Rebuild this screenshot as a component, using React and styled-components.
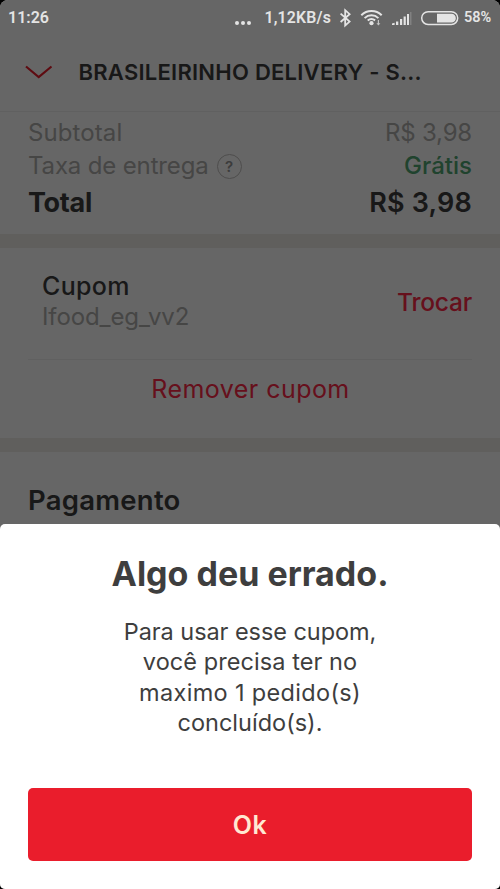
import React from 'react';
import styled, { createGlobalStyle } from 'styled-components';

const GlobalStyle = createGlobalStyle`
  * { box-sizing: border-box; }
  body { margin: 0; background: #000; }
`;

const Screen = styled.div`
  position: relative;
  width: 500px;
  height: 889px;
  overflow: hidden;
  border-radius: 8px 8px 5px 5px;
  background: #fff;
  color: #3e3e3e;
  font-family: Inter, "Liberation Sans", sans-serif;
`;

const Page = styled.main`
  display: flex;
  flex-direction: column;
  height: 100%;
`;

const Text = styled.span`
  display: block;
  margin: 0;
  white-space: pre;
  font-size: ${(p) => p.$size || 24}px;
  font-weight: ${(p) => p.$weight || 380};
  line-height: ${(p) => p.$line || 34}px;
  letter-spacing: ${(p) => p.$track || 0}px;
  color: ${(p) => p.$color || 'inherit'};
`;

const Header = styled.header`
  display: flex;
  align-items: center;
  height: 112px;
  padding: 32px 24px 0;
  border-bottom: 1px solid #f0f0f0;

  svg { margin-right: 25.5px; }
`;

const Summary = styled.section`
  display: flex;
  flex-direction: column;
  height: 122px;
  padding: 4px 28px 0;
`;

const SummaryRow = styled.div`
  display: flex;
  align-items: center;
  justify-content: space-between;
  height: ${(p) => p.$height}px;
`;

const Label = styled.div`
  display: flex;
  align-items: center;
`;

const Help = styled.span`
  display: flex;
  align-items: center;
  justify-content: center;
  width: 25px;
  height: 25px;
  margin-left: 8px;
  border: 1.5px solid #c2c0be;
  border-radius: 50%;
  color: #969696;
  font-size: 15px;
  font-weight: 600;
`;

const Band = styled.div`
  flex: none;
  height: 14px;
  background: #f0eee8;
`;

const Coupon = styled.section`
  height: 190px;
  padding: 12px 28px 0;
`;

const CouponRow = styled.div`
  display: flex;
  align-items: center;
  justify-content: space-between;
  height: 100px;
  padding: 0 0 16px 14px;
  border-bottom: 1px solid #f0f0f0;
`;

const RemoveButton = styled.button`
  display: flex;
  justify-content: center;
  width: 100%;
  height: 56px;
  padding: 12px 0 0 1px;
  border: 0;
  background: none;
  font-family: inherit;
`;

const Payment = styled.section`
  padding: 31px 28px 0;
`;

const Backdrop = styled.div`
  position: absolute;
  inset: 0;
  background: rgba(0, 0, 0, 0.6);
`;

const StatusBar = styled.div`
  position: absolute;
  top: 0;
  left: 0;
  display: flex;
  align-items: center;
  width: 100%;
  height: 35px;
  padding: 0 9px 0 8px;
  color: #e4e4e4;
  font-family: Roboto, sans-serif;
  font-weight: 600;
`;

const StatusText = styled.span`
  font-size: ${(p) => p.$size}px;
  letter-spacing: ${(p) => p.$track || 0}px;
  line-height: 35px;
  white-space: nowrap;
`;

const StatusIcons = styled.div`
  display: flex;
  align-items: center;
  margin-left: auto;

  svg { display: block; flex: none; }
`;

const NetworkSpeed = styled(StatusText)`
  margin: 0 8px 0 12px;
`;

const BatteryLevel = styled(StatusText)`
  margin-left: 5px;
`;

const Sheet = styled.div`
  position: absolute;
  left: 0;
  bottom: 0;
  display: flex;
  flex-direction: column;
  align-items: center;
  width: 100%;
  height: 365px;
  padding: 29px 28px 28px;
  border-radius: 5px 5px 0 0;
  background: #fff;
`;

const Message = styled.div`
  display: flex;
  flex-direction: column;
  align-items: center;
  margin-top: 21.5px;
`;

const OkButton = styled.button`
  display: flex;
  align-items: center;
  justify-content: center;
  width: 100%;
  height: 73.5px;
  padding: 1px 0 0;
  margin-top: auto;
  border: 0;
  border-radius: 5px;
  background: #ea1d2c;
  font-family: inherit;
`;

const red = '#ea1d2c';
const dimmedRed = '#ff2847';
const gray = '#b0aeac';

const message = [
  ['Para usar esse cupom,', -0.06],
  ['você precisa ter no', 0.07],
  ['maximo 1 pedido(s)', 0.33],
  ['concluído(s).', 0],
];

function MoreDots() {
  return (
    <svg width="18" height="34" viewBox="234 0 18 34" fill="#e4e4e4">
      <circle cx="237" cy="22" r="2" />
      <circle cx="243" cy="22" r="2" />
      <circle cx="249" cy="22" r="2" />
    </svg>
  );
}

function StatusGlyphs() {
  return (
    <svg width="120" height="34" viewBox="339 0 120 34" fill="none" stroke="#e4e4e4">
      <g fill="#e4e4e4" stroke="none">
        <circle cx="371.5" cy="22.2" r="2.1" />
        <path d="M392 24v-1.5l2.6-.8V24zM396 24v-3.5h2.3V24zM400 24v-6h2.2V24zM403.6 24v-8.6h2.2V24zM407 24v-11h2V24z" />
        <path d="M437 12.8h14.5a4.3 4.3 0 0 1 0 8.7H437z" />
        <path d="M377.8 19v3.2h-1.4l2 2.3 2-2.3H379V19z" opacity=".75" />
      </g>
      <path d="M410.7 11v13" opacity=".22" strokeWidth="1.6" />
      <path d="M340.6 12.6l9 8-4.4 3.9V9.2l4.4 4-9 7.8" strokeWidth="1.8" />
      <path d="M361.3 14.2a14.6 14.6 0 0 1 20.4 0M364.6 17.1a10 10 0 0 1 13.8 0M367.7 19.5a6 6 0 0 1 7.4-.1" strokeWidth="2" />
      <rect x="421.7" y="10.7" width="36" height="12.8" rx="6.4" strokeWidth="1.5" />
    </svg>
  );
}

export default function App() {
  return (
    <>
      <GlobalStyle />
      <Screen>
        <Page>
          <Header>
            <svg width="29" height="16" viewBox="0 0 29 16" fill="none" stroke={red} strokeWidth="2.2">
              <path d="M2 2.5 14.7 13 27.5 2.5" />
            </svg>
            <Text as="h1" $size={22} $weight={600} $track={0.25}>BRASILEIRINHO DELIVERY - S...</Text>
          </Header>
          <Summary>
            <SummaryRow $height={33}>
              <Text $color={gray} $track={0.1}>Subtotal</Text>
              <Text $color={gray} $track={-0.2}>R$ 3,98</Text>
            </SummaryRow>
            <SummaryRow $height={34}>
              <Label>
                <Text $color={gray} $track={-0.15}>Taxa de entrega</Text>
                <Help>?</Help>
              </Label>
              <Text $weight={460} $color="#50a773">Grátis</Text>
            </SummaryRow>
            <SummaryRow $height={39}>
              <Text $size={27} $weight={660} $track={-0.3}>Total</Text>
              <Text $size={27} $weight={600} $track={0.2}>R$ 3,98</Text>
            </SummaryRow>
          </Summary>
          <Band />
          <Coupon>
            <CouponRow>
              <div>
                <Text $size={25} $weight={480} $line={30.4} $track={0.3}>Cupom</Text>
                <Text $line={30.4} $color={gray} $track={-0.1}>Ifood_eg_vv2</Text>
              </div>
              <Text $size={24.5} $weight={480} $color={dimmedRed} $track={-0.2}>Trocar</Text>
            </CouponRow>
            <RemoveButton>
              <Text $size={25} $color={dimmedRed} $track={0.45}>Remover cupom</Text>
            </RemoveButton>
          </Coupon>
          <Band />
          <Payment>
            <Text as="h2" $size={27.5} $weight={600} $track={0.25}>Pagamento</Text>
          </Payment>
        </Page>
        <Backdrop />
        <StatusBar>
          <StatusText $size={16}>11:26</StatusText>
          <StatusIcons>
            <MoreDots />
            <NetworkSpeed $size={15.8} $track={0.2}>1,12KB/s</NetworkSpeed>
            <StatusGlyphs />
            <BatteryLevel $size={14.5} $track={-0.1}>58%</BatteryLevel>
          </StatusIcons>
        </StatusBar>
        <Sheet>
          <Text as="h2" $size={34} $weight={660} $line={42}>Algo deu errado.</Text>
          <Message>
            {message.map(([line, track]) => (
              <Text key={line} $size={23.5} $line={30.5} $track={track}>{line}</Text>
            ))}
          </Message>
          <OkButton>
            <Text $size={25} $weight={560} $color="#ffe8d2" $track={0.5}>Ok</Text>
          </OkButton>
        </Sheet>
      </Screen>
    </>
  );
}
